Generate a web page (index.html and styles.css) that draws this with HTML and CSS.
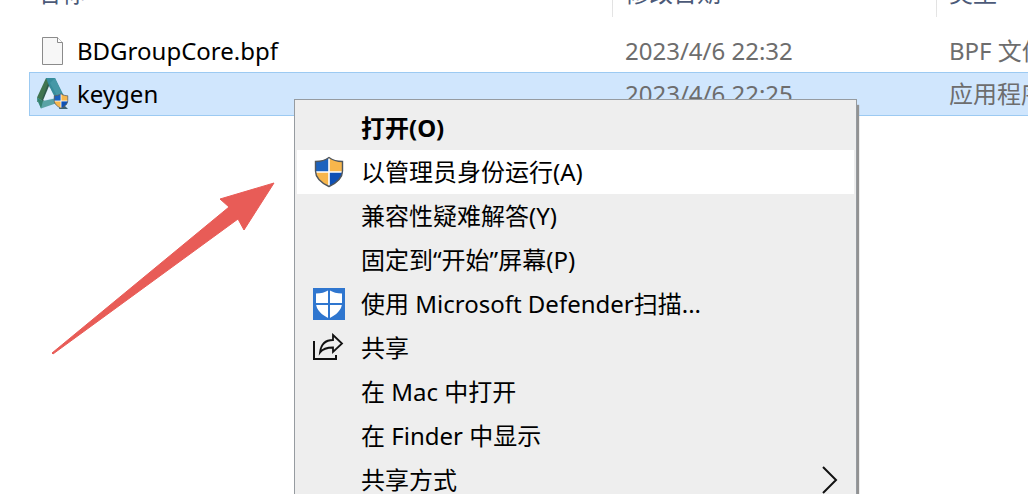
FILE: index.html
```html
<!DOCTYPE html>
<html lang="zh-CN">
<head>
    <meta charset="UTF-8">
    <meta name="viewport" content="width=device-width, initial-scale=1.0">
    <title>keygen</title>
    <link rel="stylesheet" href="styles.css">
</head>
<body>
    <svg class="symbols" aria-hidden="true">
        <symbol id="shield" viewBox="0 0 32 32">
            <path d="M16 1.500C12 4.500 7 5.500 2.500 5.500V15c0 7 6 12 13.500 15.500C23.500 27 29.500 22 29.500 15V5.500C25 5.500 20 4.500 16 1.500z" fill="#f7b64c"/>
            <path d="M16 1.500C12 4.500 7 5.500 2.500 5.500V16H16z" fill="#1c62bd"/>
            <path d="M16 16h13.500c-.4 6.500-6.500 11.300-13.500 14.500z" fill="#0f50b4"/>
            <path d="M16 2v28M2.500 16h27" stroke="#fff" stroke-width="1.600"/>
            <path d="M16 1.500C12 4.500 7 5.500 2.500 5.500V15c0 7 6 12 13.500 15.500C23.500 27 29.500 22 29.500 15V5.500C25 5.500 20 4.500 16 1.500z" fill="none" stroke="#50565c" stroke-width="1.400"/>
        </symbol>
    </svg>

    <main class="explorer">
        <table class="files">
            <colgroup>
                <col class="col-name">
                <col class="col-date">
                <col>
            </colgroup>
            <thead>
                <tr>
                    <th>名称</th>
                    <th>修改日期</th>
                    <th>类型</th>
                </tr>
            </thead>
            <tbody>
                <tr>
                    <td>
                        <div class="file">
                            <svg class="file-icon" viewBox="0 0 32 32">
                                <path d="M5.500 2.500h15l5 5v22h-20z" fill="#f7f7f7" stroke="#8b8b8b"/>
                                <path d="M20.500 2.500v5h5" fill="#fff" stroke="#8b8b8b"/>
                            </svg>
                            <span>BDGroupCore.bpf</span>
                        </div>
                    </td>
                    <td>2023/4/6 22:32</td>
                    <td>BPF 文件</td>
                </tr>
                <tr class="selected">
                    <td>
                        <div class="file">
                            <svg class="file-icon" viewBox="0 0 32 32">
                                <path d="M9 0L0 19.500V24l5-2 7-14V0z" fill="#41754f"/>
                                <path d="M12 3L5 21l-1 8 9-19z" fill="#2f5b4b"/>
                                <path d="M9 0h9l9 18-9 5z" fill="#378d9b"/>
                                <path d="M18 0l12 27-7-4L13 5z" fill="#4598a6"/>
                                <path d="M0 19.500V22l4 8.500L20 25v-5L6 23z" fill="#5aa3a5"/>
                                <path d="M0 20l4 10.500L6 23z" fill="#35826f"/>
                                <path d="M12 8L6 22.500l12-3z" fill="#e4f1fc"/>
                                <path d="M24 24l7 7h-9z" fill="#3b6273"/>
                                <use href="#shield" x="16" y="15" width="16" height="16"/>
                            </svg>
                            <span>keygen</span>
                        </div>
                    </td>
                    <td>2023/4/6 22:25</td>
                    <td>应用程序</td>
                </tr>
            </tbody>
        </table>

        <svg class="pointer" viewBox="0 0 224 174" aria-hidden="true">
            <path d="M1 172L178 26 169 18 223 2 193 49 187 38 2 173z" fill="#e85c57" stroke="#e85c57" stroke-linejoin="round"/>
        </svg>

        <div class="menu" role="menu">
            <button class="item default" role="menuitem"><span class="icon"></span>打开(O)</button>
            <button class="item active" role="menuitem">
                <span class="icon"><svg viewBox="0 0 32 32"><use href="#shield"/></svg></span>以管理员身份运行(A)
            </button>
            <button class="item" role="menuitem"><span class="icon"></span>兼容性疑难解答(Y)</button>
            <button class="item" role="menuitem"><span class="icon"></span>固定到“开始”屏幕(P)</button>
            <button class="item" role="menuitem">
                <span class="icon">
                    <svg viewBox="0 0 32 32">
                        <path d="M0 0h32v32H0z" fill="#2f76cf"/>
                        <path d="M16 2c-4 2.500-8 3.500-13 3.500V15c0 7 6 12 13 15.500C23 27 29 22 29 15V5.500C24 5.500 20 4.500 16 2z" fill="#fff"/>
                        <path d="M16 1v30M2 16h28" stroke="#2f76cf" stroke-width="2"/>
                    </svg>
                </span>使用 Microsoft Defender扫描...
            </button>
            <button class="item" role="menuitem">
                <span class="icon">
                    <svg viewBox="0 0 32 32" fill="none" stroke="#111" stroke-width="2">
                        <path d="M1 9v18h22v-4"/>
                        <path d="M20 3l9 8.500-9 8.500v-4.500c-6 0-10 1-13 5C8 12 12 8 20 8z" stroke-width="1.800"/>
                    </svg>
                </span>共享
            </button>
            <button class="item" role="menuitem"><span class="icon"></span>在 Mac 中打开</button>
            <button class="item" role="menuitem"><span class="icon"></span>在 Finder 中显示</button>
            <button class="item" role="menuitem">
                <span class="icon"></span>共享方式
                <svg class="chevron" viewBox="0 0 16 28" fill="none" stroke="#111" stroke-width="2"><path d="M1 1l13 13L1 27"/></svg>
            </button>
        </div>
    </main>
</body>
</html>
```
FILE: styles.css
```css
body {
    margin: 0;
    background: #fff;
    color: #000;
    font-family: "Noto Sans", "Noto Sans CJK SC", sans-serif;
    font-size: 24px;
    line-height: 32px;
}

.symbols {
    position: absolute;
    width: 0;
    height: 0;
}

.explorer {
    position: relative;
    height: 100vh;
    overflow: hidden;
    padding-left: 29px;
    box-sizing: border-box;
}

/* the header row is scrolled partly out of view */
.files {
    width: 100%;
    margin-top: -27px;
    table-layout: fixed;
    border-spacing: 0;
    white-space: nowrap;
}

.col-name {
    width: 584px;
}

.col-date {
    width: 324px;
}

th {
    height: 40px;
    padding: 0 8px 4px 12px;
    color: #4c5a78;
    font-weight: normal;
    text-align: left;
    background: linear-gradient(#ddd, #e5e5e5) right / 1px 100% no-repeat;
}

th:first-child {
    padding-left: 8px;
}

th:last-child {
    background: none;
}

thead::after {
    content: "";
    display: block;
    height: 13px;
}

td {
    height: 42px;
    padding: 0 0 0 12px;
    color: #6d6d6d;
}

td:first-child {
    padding-left: 8px;
    color: #000;
}

.selected td {
    background: #d0e6fd;
    border-top: 1px solid #9ccaf2;
    border-bottom: 1px solid #9ccaf2;
}

.selected td:first-child {
    padding-left: 7px;
    border-left: 1px solid #9ccaf2;
}

.file {
    display: flex;
    align-items: center;
    gap: 8px;
}

.file-icon {
    width: 32px;
    height: 32px;
}

.pointer {
    position: absolute;
    left: 51px;
    top: 181px;
    width: 224px;
    height: 174px;
}

.menu {
    position: absolute;
    left: 294px;
    top: 99px;
    width: 563px;
    box-sizing: border-box;
    padding: 6px 2px;
    border: 1px solid #969ba0;
    background: #eee;
    box-shadow: 2px 6px 1px #929292;
}

.item {
    display: flex;
    align-items: center;
    width: 100%;
    height: 44px;
    padding: 0 16px;
    border: none;
    background: transparent;
    color: #000;
    font: inherit;
    text-align: left;
    white-space: nowrap;
}

.item.active,
.item:hover {
    background: #fff;
}

.default {
    font-weight: bold;
}

.icon {
    width: 32px;
    height: 32px;
    margin-right: 16px;
}

.icon svg {
    display: block;
}

.chevron {
    width: 16px;
    height: 28px;
    margin-left: auto;
}
```
